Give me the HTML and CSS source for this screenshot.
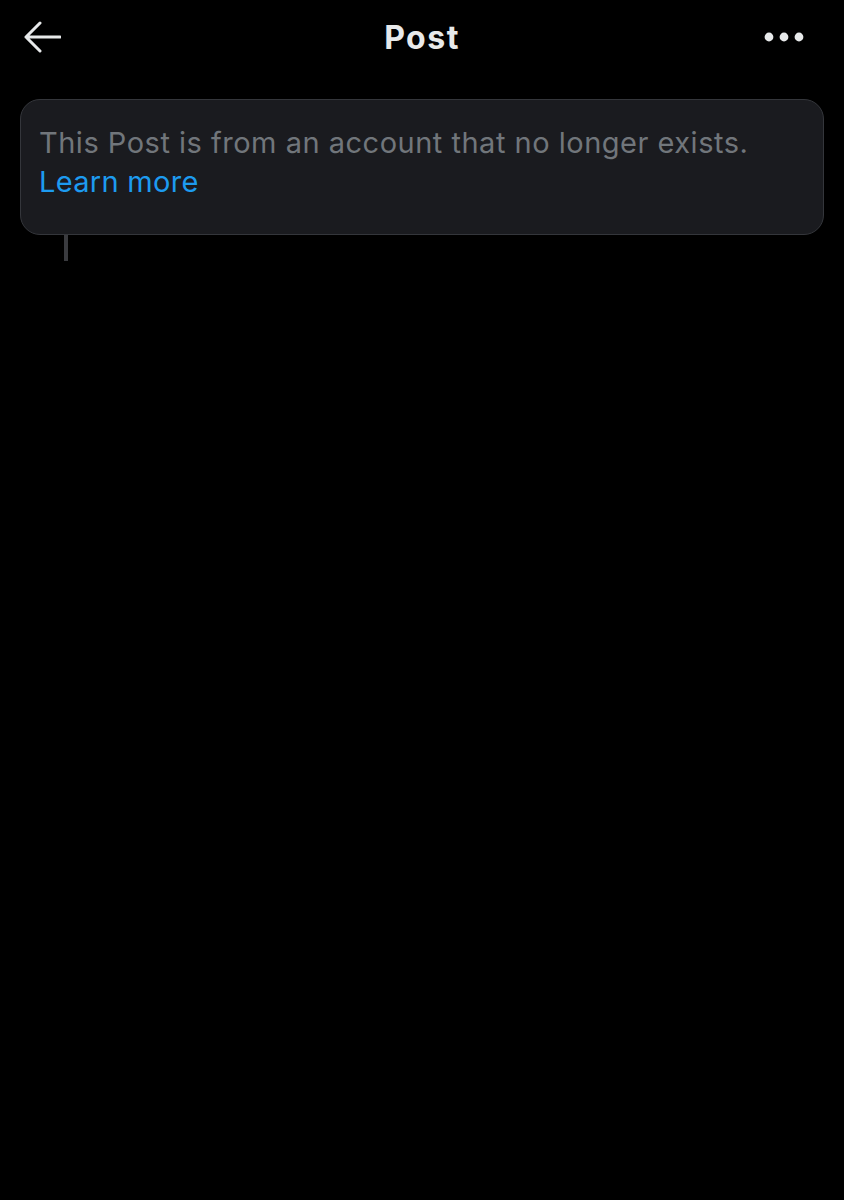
FILE: index.html
```html
<!DOCTYPE html>
<html>
<head>
<meta charset="utf-8">
<link rel="stylesheet" href="styles.css">
</head>
<body>
<header class="topbar">
  <button class="icon-btn back" aria-label="Back">
    <svg width="37" height="32" viewBox="0 0 37 32"><path d="M16 2 L2 16 L16 30 M2 16 H36" fill="none" stroke="#e7e9ea" stroke-width="3" stroke-linecap="round" stroke-linejoin="round"/></svg>
  </button>
  <h1 class="title">Post</h1>
  <button class="icon-btn more" aria-label="More">
    <svg width="40" height="10" viewBox="0 0 40 10"><circle cx="5" cy="5" r="4.4" fill="#e7e9ea"/><circle cx="20" cy="5" r="4.4" fill="#e7e9ea"/><circle cx="35" cy="5" r="4.4" fill="#e7e9ea"/></svg>
  </button>
</header>
<main class="content">
  <div class="notice">
    <p class="notice-text">This Post is from an account that no longer exists. <a class="learn" href="#">Learn more</a></p>
  </div>
  <div class="thread-line"></div>
</main>
</body>
</html>
```
FILE: styles.css
```css
html, body {
  margin: 0;
  padding: 0;
  background: #000;
  height: 100%;
}
body {
  font-family: Inter, "Noto Sans", sans-serif;
  color: #e7e9ea;
}
.topbar {
  display: flex;
  align-items: center;
  justify-content: space-between;
  height: 74px;
  padding: 0 40px 0 24px;
  position: relative;
}
.icon-btn {
  background: none;
  border: 0;
  padding: 0;
  display: flex;
  align-items: center;
}
.title {
  position: absolute;
  left: 0;
  right: 0;
  text-align: center;
  margin: 0;
  font-size: 32px;
  font-weight: 700;
  letter-spacing: 1.5px;
  color: #e7e9ea;
  pointer-events: none;
}
.content {
  padding: 25px 20px 0;
}
.notice {
  background: #1a1b1f;
  border: 1px solid #34363b;
  border-radius: 20px;
  padding: 24px 18px 33px;
}
.notice-text {
  margin: 0;
  font-size: 29px;
  line-height: 38.5px;
  letter-spacing: 0.5px;
  color: #71767b;
  max-width: 750px;
}
.learn {
  color: #1d9bf0;
  text-decoration: none;
  letter-spacing: 0.3px;
}
.thread-line {
  width: 4px;
  height: 26px;
  background: #3a3b3f;
  margin-left: 44px;
}
```
